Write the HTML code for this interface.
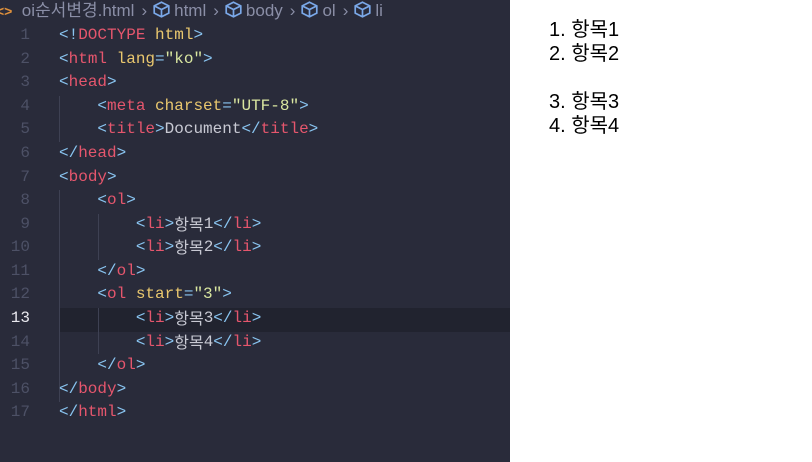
<!DOCTYPE html>
<html><head><meta charset="utf-8"><style>
body{margin:0;width:812px;height:462px;overflow:hidden;background:#fff;font-family:"Liberation Sans","Noto Sans CJK KR",sans-serif;}
#ed{position:absolute;left:0;top:0;width:510px;height:462px;background:#292b3a;}
#bc{position:absolute;left:0;top:0;width:510px;height:22px;color:#8a8ea6;font-size:17px;line-height:21px;white-space:nowrap;}
#bc .sp{margin:0 6px 0 7px}
.cube{display:inline-block;vertical-align:-2px;margin:0 4px 0 0}
.ln{position:absolute;left:0;width:30px;text-align:right;color:#4d5166;font:16px/20px "Liberation Mono",monospace;}
.cd{position:absolute;left:59px;height:20px;font:16px/20px "Liberation Mono","Noto Sans CJK KR",monospace;color:#c8c9d3;white-space:pre;}
.b{color:#89c4f0}.t{color:#e5566d}.a{color:#e9c76e}.s{color:#d9e6a0}.k{display:inline-block;vertical-align:top;height:20px;font-family:"Noto Sans CJK KR",sans-serif;font-size:16px;line-height:19px;color:#c8c9d3}
.g{position:absolute;width:1px;background:#3e4153}
#hl{position:absolute;left:59px;top:308px;width:451px;height:24px;background:#21232f}
.out{position:absolute;left:549px;font-size:20px;line-height:24px;color:#000;}
</style></head><body>
<div id="ed">
<div id="bc"><span style="color:#e0913c;font-weight:bold;font-size:14px;margin-left:-4px">&lt;&gt;</span>&nbsp; oi순서변경.html<span class="sp">›</span><svg class="cube" width="17" height="17" viewBox="0 0 14 14" fill="none" stroke="#7aa8e8" stroke-width="1.4"><path d="M7 1L13 4V10L7 13L1 10V4Z M1 4L7 7L13 4 M7 7V13"/></svg>html<span class="sp">›</span><svg class="cube" width="17" height="17" viewBox="0 0 14 14" fill="none" stroke="#7aa8e8" stroke-width="1.4"><path d="M7 1L13 4V10L7 13L1 10V4Z M1 4L7 7L13 4 M7 7V13"/></svg>body<span class="sp">›</span><svg class="cube" width="17" height="17" viewBox="0 0 14 14" fill="none" stroke="#7aa8e8" stroke-width="1.4"><path d="M7 1L13 4V10L7 13L1 10V4Z M1 4L7 7L13 4 M7 7V13"/></svg>ol<span class="sp">›</span><svg class="cube" width="17" height="17" viewBox="0 0 14 14" fill="none" stroke="#7aa8e8" stroke-width="1.4"><path d="M7 1L13 4V10L7 13L1 10V4Z M1 4L7 7L13 4 M7 7V13"/></svg>li</div>
<div id="hl"></div>
<div class="g" style="left:59px;top:96px;height:46px"></div>
<div class="g" style="left:59px;top:190px;height:212px"></div>
<div class="g" style="left:98px;top:214px;height:46px"></div>
<div class="g" style="left:98px;top:308px;height:46px"></div>
<div class="ln" style="top:25px">1</div><div class="ln" style="top:49px">2</div><div class="ln" style="top:72px">3</div><div class="ln" style="top:96px">4</div><div class="ln" style="top:119px">5</div><div class="ln" style="top:143px">6</div><div class="ln" style="top:167px">7</div><div class="ln" style="top:190px">8</div><div class="ln" style="top:214px">9</div><div class="ln" style="top:237px">10</div><div class="ln" style="top:261px">11</div><div class="ln" style="top:284px">12</div><div class="ln" style="top:308px;color:#e8e8ee">13</div><div class="ln" style="top:332px">14</div><div class="ln" style="top:355px">15</div><div class="ln" style="top:379px">16</div><div class="ln" style="top:402px">17</div>
<div class="cd" style="top:25px"><span class="b">&lt;!</span><span class="t">DOCTYPE</span> <span class="a">html</span><span class="b">&gt;</span></div>
<div class="cd" style="top:49px"><span class="b">&lt;</span><span class="t">html</span> <span class="a">lang</span><span class="b">=</span><span class="s">"ko"</span><span class="b">&gt;</span></div>
<div class="cd" style="top:72px"><span class="b">&lt;</span><span class="t">head</span><span class="b">&gt;</span></div>
<div class="cd" style="top:96px">    <span class="b">&lt;</span><span class="t">meta</span> <span class="a">charset</span><span class="b">=</span><span class="s">"UTF-8"</span><span class="b">&gt;</span></div>
<div class="cd" style="top:119px">    <span class="b">&lt;</span><span class="t">title</span><span class="b">&gt;</span>Document<span class="b">&lt;/</span><span class="t">title</span><span class="b">&gt;</span></div>
<div class="cd" style="top:143px"><span class="b">&lt;/</span><span class="t">head</span><span class="b">&gt;</span></div>
<div class="cd" style="top:167px"><span class="b">&lt;</span><span class="t">body</span><span class="b">&gt;</span></div>
<div class="cd" style="top:190px">    <span class="b">&lt;</span><span class="t">ol</span><span class="b">&gt;</span></div>
<div class="cd" style="top:214px">        <span class="b">&lt;</span><span class="t">li</span><span class="b">&gt;</span><span class="k">항목</span>1<span class="b">&lt;/</span><span class="t">li</span><span class="b">&gt;</span></div>
<div class="cd" style="top:237px">        <span class="b">&lt;</span><span class="t">li</span><span class="b">&gt;</span><span class="k">항목</span>2<span class="b">&lt;/</span><span class="t">li</span><span class="b">&gt;</span></div>
<div class="cd" style="top:261px">    <span class="b">&lt;/</span><span class="t">ol</span><span class="b">&gt;</span></div>
<div class="cd" style="top:284px">    <span class="b">&lt;</span><span class="t">ol</span> <span class="a">start</span><span class="b">=</span><span class="s">"3"</span><span class="b">&gt;</span></div>
<div class="cd" style="top:308px">        <span class="b">&lt;</span><span class="t">li</span><span class="b">&gt;</span><span class="k">항목</span>3<span class="b">&lt;/</span><span class="t">li</span><span class="b">&gt;</span></div>
<div class="cd" style="top:332px">        <span class="b">&lt;</span><span class="t">li</span><span class="b">&gt;</span><span class="k">항목</span>4<span class="b">&lt;/</span><span class="t">li</span><span class="b">&gt;</span></div>
<div class="cd" style="top:355px">    <span class="b">&lt;/</span><span class="t">ol</span><span class="b">&gt;</span></div>
<div class="cd" style="top:379px"><span class="b">&lt;/</span><span class="t">body</span><span class="b">&gt;</span></div>
<div class="cd" style="top:402px"><span class="b">&lt;/</span><span class="t">html</span><span class="b">&gt;</span></div>
</div>
<div class="out" style="top:18px">1. 항목1</div>
<div class="out" style="top:42px">2. 항목2</div>
<div class="out" style="top:90px">3. 항목3</div>
<div class="out" style="top:114px">4. 항목4</div>
</body></html>
